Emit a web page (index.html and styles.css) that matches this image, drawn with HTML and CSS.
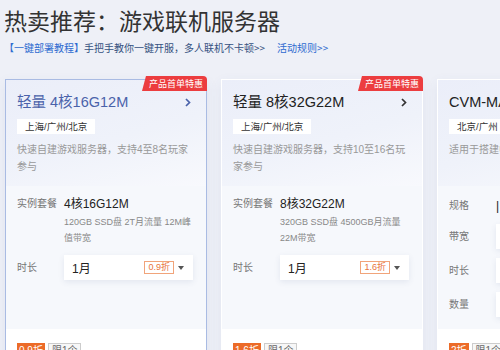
FILE: index.html
```html
<!DOCTYPE html>
<html lang="zh-CN">
<head>
    <meta charset="UTF-8">
    <title>热卖推荐：游戏联机服务器</title>
    <link rel="stylesheet" href="styles.css">
</head>
<body>
<div class="page">
    <h1 class="title">热卖推荐：游戏联机服务器</h1>
    <p class="intro">
        <a class="intro_link">【一键部署教程】</a><span>手把手教你一键开服，多人联机不卡顿&gt;&gt;</span><a class="intro_rule">活动规则&gt;&gt;</a>
    </p>

    <div class="cards">
        <!-- 卡片1 -->
        <div class="card card_active">
            <span class="card_badge">产品首单特惠</span>
            <div class="card_head">
                <div class="card_title">
                    <span>轻量 4核16G12M</span>
                    <svg class="chevron" width="6" height="9" viewBox="0 0 6 9"><polyline points="1,1 4.5,4.5 1,8" fill="none" stroke="currentColor" stroke-width="1.7"/></svg>
                </div>
                <span class="card_area">上海/广州/北京</span>
                <p class="card_desc">快速自建游戏服务器，支持4至8名玩家参与</p>
            </div>
            <div class="card_body">
                <div class="row">
                    <span class="row_label">实例套餐</span>
                    <div class="row_value">
                        <div class="spec_name">4核16G12M</div>
                        <div class="spec_info">120GB SSD盘 2T月流量 12M峰值带宽</div>
                    </div>
                </div>
                <div class="row row_mid">
                    <span class="row_label">时长</span>
                    <div class="select">
                        <span class="select_text">1月</span>
                        <span class="select_off">0.9折</span>
                        <svg class="caret" width="6" height="4" viewBox="0 0 6 4"><polygon points="0,0 6,0 3,4" fill="#555"/></svg>
                    </div>
                </div>
            </div>
            <div class="card_foot">
                <span class="off">0.9折</span>
                <span class="limit">限1个</span>
            </div>
        </div>

        <!-- 卡片2 -->
        <div class="card">
            <span class="card_badge">产品首单特惠</span>
            <div class="card_head">
                <div class="card_title">
                    <span>轻量 8核32G22M</span>
                    <svg class="chevron" width="6" height="9" viewBox="0 0 6 9"><polyline points="1,1 4.5,4.5 1,8" fill="none" stroke="currentColor" stroke-width="1.7"/></svg>
                </div>
                <span class="card_area">上海/广州/北京</span>
                <p class="card_desc">快速自建游戏服务器，支持10至16名玩家参与</p>
            </div>
            <div class="card_body">
                <div class="row">
                    <span class="row_label">实例套餐</span>
                    <div class="row_value">
                        <div class="spec_name">8核32G22M</div>
                        <div class="spec_info">320GB SSD盘 4500GB月流量 22M带宽</div>
                    </div>
                </div>
                <div class="row row_mid">
                    <span class="row_label">时长</span>
                    <div class="select">
                        <span class="select_text">1月</span>
                        <span class="select_off">1.6折</span>
                        <svg class="caret" width="6" height="4" viewBox="0 0 6 4"><polygon points="0,0 6,0 3,4" fill="#555"/></svg>
                    </div>
                </div>
            </div>
            <div class="card_foot">
                <span class="off">1.6折</span>
                <span class="limit">限1个</span>
            </div>
        </div>

        <!-- 卡片3 -->
        <div class="card">
            <div class="card_head">
                <div class="card_title">
                    <span>CVM-MA3 4核8G</span>
                    <svg class="chevron" width="6" height="9" viewBox="0 0 6 9"><polyline points="1,1 4.5,4.5 1,8" fill="none" stroke="currentColor" stroke-width="1.7"/></svg>
                </div>
                <span class="card_area">北京/广州</span>
                <p class="card_desc">适用于搭建中小型游戏服务器</p>
            </div>
            <div class="card_body card_body_cvm">
                <div class="row">
                    <span class="row_label">规格</span>
                    <div class="row_value"><div class="spec_name">| 4核8G</div></div>
                </div>
                <div class="row row_mid">
                    <span class="row_label">带宽</span>
                    <div class="select"><span class="select_text">5M</span></div>
                </div>
                <div class="row row_mid">
                    <span class="row_label">时长</span>
                    <div class="select"><span class="select_text">1月</span></div>
                </div>
                <div class="row row_mid">
                    <span class="row_label">数量</span>
                    <div class="select"><span class="select_text">1</span></div>
                </div>
            </div>
            <div class="card_foot">
                <span class="off">2折</span>
                <span class="limit">限1个</span>
            </div>
        </div>
    </div>
</div>
</body>
</html>
```

FILE: styles.css
```css
html, body {
    margin: 0;
    width: 500px;
    height: 350px;
    overflow: hidden;
}

body {
    background-color: #eef0f7;
    font-family: "Liberation Sans", "Noto Sans CJK SC", sans-serif;
    color: #333;
}

.page {
    padding: 8px 0 0 4px;
}

.title {
    margin: 0;
    font-size: 23px;
    line-height: 24px;
    font-weight: normal;
    color: #333;
    font-family: "Noto Sans CJK SC", sans-serif;
}

.intro {
    margin: 9px 0 0;
    font-size: 10px;
    line-height: 14px;
    color: #35507f;
    font-family: "Noto Sans CJK SC", sans-serif;
}

.intro_link {
    color: #2d6ad0;
}

.intro_rule {
    margin-left: 12px;
    color: #2d6ad0;
}

.cards {
    display: flex;
    gap: 14px;
    margin: 24px 0 0 1px;
}

.card {
    flex: 0 0 202px;
    box-sizing: border-box;
    position: relative;
    display: flex;
    flex-direction: column;
    background-color: #fff;
    border: 1px solid transparent;
    box-shadow: 0 4px 12px rgba(70, 90, 150, 0.08);
}

.card_active {
    border-color: #a9bbe3;
}

.card_badge {
    position: absolute;
    top: -4px;
    right: -1px;
    height: 15px;
    line-height: 15px;
    padding: 0 4px 0 7px;
    font-size: 9px;
    color: #fff;
    background-color: #ec3d3f;
    border-radius: 0 4px 0 0;
    clip-path: polygon(4px 0, 100% 0, 100% 100%, 0 100%);
    font-family: "Noto Sans CJK SC", sans-serif;
}

.card_head {
    display: flex;
    flex-direction: column;
    align-items: flex-start;
    padding: 12px 11px 11px;
    background: linear-gradient(165deg, #ebeef9 0%, #eff2fa 55%, #f8f9fd 100%);
}

.card_title {
    align-self: stretch;
    display: flex;
    align-items: center;
    justify-content: space-between;
    font-size: 14.5px;
    line-height: 20px;
    color: #222;
    white-space: nowrap;
}

.card_active .card_title {
    color: #4a62aa;
}

.chevron {
    margin-right: 4px;
    color: #333;
}

.card_active .chevron {
    color: #4a62aa;
}

.card_area {
    margin-top: 7px;
    padding: 0 8px;
    font-size: 9.5px;
    line-height: 15px;
    color: #333;
    background-color: #fff;
}

.card_desc {
    margin: 7px 0 0;
    height: 34px;
    font-size: 10px;
    line-height: 17px;
    color: #999;
}

.card_body {
    flex: 1;
    padding: 9px 11px 12px;
    background-color: #f6f8fc;
}

.card_body_cvm {
    padding-top: 11px;
}

.row {
    display: flex;
    align-items: flex-start;
}

.row_mid {
    align-items: center;
    margin-top: 9px;
}

.row_label {
    flex: 0 0 47px;
    font-size: 10px;
    line-height: 18px;
    color: #777;
}

.row_value {
    flex: 1;
}

.spec_name {
    font-size: 12px;
    line-height: 18px;
    color: #222;
    white-space: nowrap;
}

.spec_info {
    margin-top: 1px;
    font-size: 9px;
    line-height: 16px;
    color: #888;
}

.select {
    flex: 1;
    display: flex;
    align-items: center;
    height: 25px;
    margin-right: 2px;
    padding: 0 9px 0 8px;
    background-color: #fff;
    box-shadow: 0 2px 6px rgba(60, 80, 130, 0.1);
}

.select_text {
    font-size: 12px;
    color: #222;
}

.select_off {
    margin-left: auto;
    padding: 0 3px;
    font-size: 9px;
    line-height: 11px;
    color: #e8743b;
    border: 1px solid #f1a47a;
}

.caret {
    margin-left: 4px;
}

.card_foot {
    display: flex;
    gap: 3px;
    padding: 14px 11px 12px;
    background-color: #fff;
}

.off {
    padding: 0 2px;
    font-size: 10px;
    line-height: 16px;
    color: #fff;
    background-color: #ec6b28;
}

.limit {
    padding: 0 3px;
    font-size: 10px;
    line-height: 14px;
    color: #666;
    background-color: #f7f7f7;
    border: 1px solid #ccc;
}
```
